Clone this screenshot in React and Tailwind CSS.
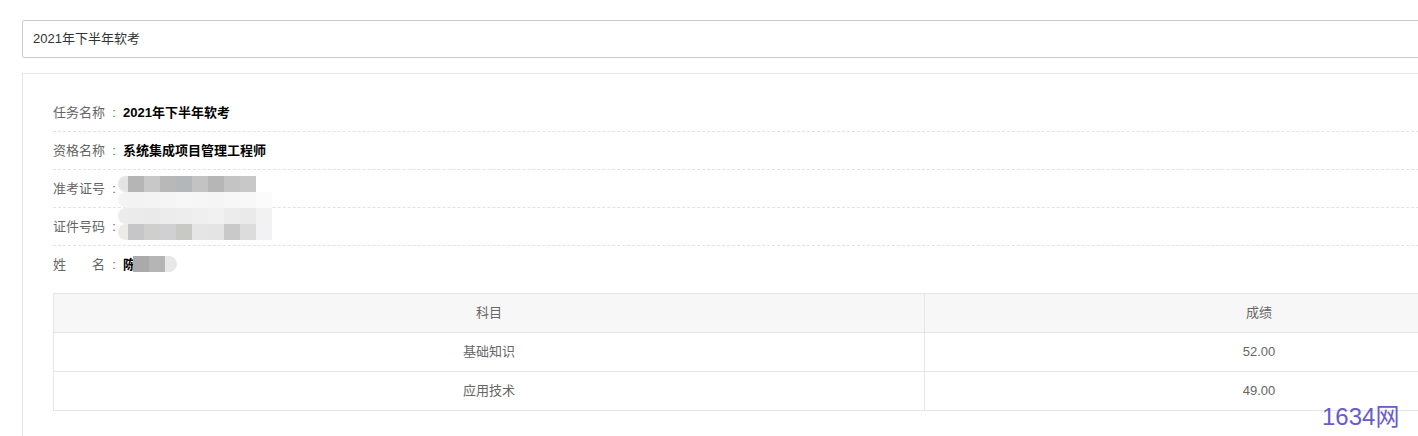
import React from "react";

const font = { fontFamily: '"Liberation Sans", "Noto Sans CJK SC", sans-serif' };

function Mosaic({ cells, className }) {
  return (
    <div className={"absolute flex flex-col " + className}>
      {cells.map((row, i) => (
        <div key={i} className="flex">
          {row.map((c, j) => (
            <div
              key={j}
              className={"h-[16px] " + (j === 0 ? "w-[10px] rounded-l-[8px]" : "w-[16px]")}
              style={{ background: c }}
            />
          ))}
        </div>
      ))}
    </div>
  );
}

function Row({ label, children, last }) {
  return (
    <div
      className={
        "relative flex h-[38px] items-center text-[13px] " +
        (last ? "" : "border-b border-dashed border-[#e2e2e2]")
      }
    >
      <span className="text-[#666]">{label}</span>
      <span className="inline-block w-[18px] text-center text-[#666]">:</span>
      <span className="font-bold text-black">{children}</span>
    </div>
  );
}

export default function App() {
  return (
    <div className="relative h-[436px] w-[1418px] overflow-hidden bg-white" style={font}>
      <div className="w-[1660px] px-[22px] pt-[20px]">
        <div className="flex h-[38px] items-center rounded-[2px] border border-[#cccccc] px-[10px] text-[13px] text-[#333]">
          2021年下半年软考
        </div>
        <div className="mt-[15px] border border-[#e6e6e6] px-[30px] pt-[20px] pb-[40px]">
          <div className="w-[1541px]">
            <Row label="任务名称">2021年下半年软考</Row>
            <Row label="资格名称">系统集成项目管理工程师</Row>
            <Row label="准考证号">
              <Mosaic
                className="left-[65px] top-[6px]"
                cells={[
                  ["#e4e4e4", "#b5b5b5", "#c8c8c8", "#b8b8b8", "#b4b7ba", "#c3c3c3", "#b6b6b6", "#c4c4c4", "#c8c8c8"],
                  ["#f4f4f4", "#f3f3f3", "#f4f4f4", "#f5f5f5", "#f7f7f7", "#f6f6f6", "#f5f5f5", "#f7f7f7", "#f8f8f8", "#fbfbfb"],
                ]}
              />
            </Row>
            <Row label="证件号码">
              <Mosaic
                className="left-[65px] top-0"
                cells={[
                  ["#ececec", "#ebebeb", "#eaeaea", "#ececec", "#ededed", "#efefef", "#f1f1f1", "#ececec", "#eaeaea", "#f2f2f2"],
                  ["#ecebe8", "#c6c6c8", "#cfcfcd", "#d0d0d2", "#c8c8c4", "#e5e5e5", "#e4e4e4", "#c9c9c9", "#dcdcdc", "#f2f2f4"],
                ]}
              />
            </Row>
            <Row label={<span>姓<span className="inline-block w-[26px]" />名</span>} last>
              陈
              <div className="absolute left-[80px] top-[10px] flex">
                <div className="h-[16px] w-[16px] bg-[#aaaaaa]" />
                <div className="h-[16px] w-[16px] bg-[#b5b5b5]" />
                <div className="h-[16px] w-[12px] rounded-r-[8px] bg-[#e8e8e9]" />
              </div>
            </Row>
          </div>
          <table className="mt-[9px] w-[1541px] border-collapse text-[13px] text-[#666]">
            <thead>
              <tr className="bg-[#f7f7f7]">
                <th className="h-[39px] w-[871px] border border-[#e6e6e6] font-normal">科目</th>
                <th className="h-[39px] border border-[#e6e6e6] font-normal">成绩</th>
              </tr>
            </thead>
            <tbody>
              <tr>
                <td className="h-[39px] border border-[#e6e6e6] text-center">基础知识</td>
                <td className="h-[39px] border border-[#e6e6e6] text-center">52.00</td>
              </tr>
              <tr>
                <td className="h-[39px] border border-[#e6e6e6] text-center">应用技术</td>
                <td className="h-[39px] border border-[#e6e6e6] text-center">49.00</td>
              </tr>
            </tbody>
          </table>
        </div>
      </div>
      <div className="absolute left-[1322px] top-[402px] text-[24px] leading-[30px] text-[#6a5acd]">
        1634网
      </div>
    </div>
  );
}
